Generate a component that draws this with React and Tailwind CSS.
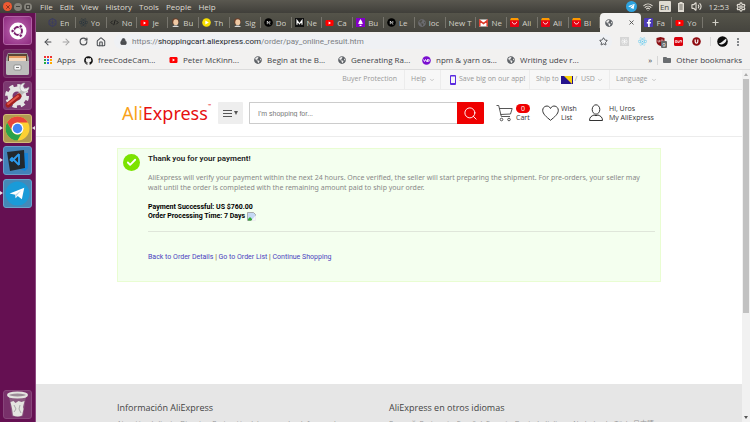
import React from "react";
import { SiUbuntu } from "react-icons/si";
import { FaYoutube, FaGithub, FaTelegramPlane, FaGlobeAmericas, FaReact, FaFacebookF, FaFolder } from "react-icons/fa";
import { ArrowLeft, ArrowRight, RotateCw, House, Lock, Star, Wifi, Volume2, Settings, Check, ChevronDown, Search, X, Plus } from "lucide-react";

const YouTube = () => (
  <svg width="9" height="8" viewBox="0 0 9 8" aria-hidden="true">
    <rect x="0.5" y="1" width="8" height="6" rx="1.2" fill="#f00" />
    <path d="M3.6 2.6 6 4 3.6 5.4Z" fill="#fff" />
  </svg>
);
const Globe = ({ color = "#5f6368" }) => <FaGlobeAmericas size={8} color={color} aria-hidden="true" />;
const Disc = ({ fill, children }) => (
  <svg width="9" height="9" viewBox="0 0 9 9" aria-hidden="true">
    <circle cx="4.5" cy="4.5" r="4.3" fill={fill} />
    {children}
  </svg>
);
const NextJs = () => (
  <Disc fill="#000">
    <path d="M3.3 6.2V3L6 6.6M5.8 3v2.2" stroke="#fff" strokeWidth="0.7" fill="none" />
  </Disc>
);
const Face = () => (
  <svg width="9" height="9" viewBox="0 0 9 9" aria-hidden="true">
    <circle cx="4.5" cy="3.6" r="3.3" fill="#6a3d28" />
    <ellipse cx="4.8" cy="4.2" rx="2.5" ry="2.9" fill="#efc9a4" />
    <path d="M1.5 9c0-2 6-2 6.3 0Z" fill="#d8d8d8" />
  </svg>
);
const AliBag = () => (
  <svg width="9" height="9" viewBox="0 0 9 9" aria-hidden="true">
    <path d="M0 2h9v6q0 1-1 1H1q-1 0-1-1Z" fill="#e60012" />
    <path d="M1 0h7l1 2.2H0Z" fill="#f90" />
    <path d="M2.3 3.8c.4 2.9 4 2.9 4.4 0" stroke="#fff" strokeWidth="0.9" fill="none" />
  </svg>
);
const Atom = () => <FaReact size={9} color="#26323c" aria-hidden="true" />;
const Hexagon = () => (
  <svg width="9" height="9" viewBox="0 0 9 9" fill="none" stroke="#3a3b62" aria-hidden="true">
    <path d="M4.5.5 8 2.5v4l-3.5 2L1 6.5v-4Z" /><path d="m1 2.5 7 4M8 2.5l-7 4M4.5.5v8" strokeWidth="0.6" />
  </svg>
);
const Code = () => (
  <svg width="9" height="9" viewBox="0 0 10 9" fill="none" stroke="#1b1b1b" aria-hidden="true">
    <path d="M3 2.5 1 4.5l2 2M7 2.5l2 2-2 2M5.8 1.5l-1.6 6" />
  </svg>
);
const Play = () => (
  <Disc fill="#f8e000"><path d="M3.3 2.4 6.8 4.5 3.3 6.6Z" fill="#fff" /></Disc>
);
const Medium = () => (
  <svg width="9" height="9" viewBox="0 0 9 9" aria-hidden="true">
    <rect width="9" height="9" fill="#111" /><path d="M2 6.8V2.4l2.5 3.4L7 2.4v4.4" stroke="#fff" strokeWidth="1.1" fill="none" />
  </svg>
);
const Bulb = () => (
  <svg width="9" height="9" viewBox="0 0 9 9" aria-hidden="true">
    <rect width="9" height="9" fill="#8400c8" /><path d="M4.5 1 6 3.5 6.8 6H2.2L3 3.5ZM3.5 6.7h2v1.3h-2Z" fill="#fff" />
  </svg>
);
const Gmail = () => (
  <svg width="9" height="8" viewBox="0 0 9 8" aria-hidden="true">
    <rect y="0.5" width="9" height="7" rx="0.6" fill="#fff" /><path d="M.8 7.5V1.6l3.7 3 3.7-3v5.9" stroke="#dd3b2c" strokeWidth="1.5" fill="none" />
  </svg>
);
const Facebook = () => (
  <span className="flex size-[9px] items-end justify-center rounded-[1px] bg-[#4b3ab5]"><FaFacebookF size={8} color="#fff" aria-hidden="true" /></span>
);

const tabs = [
  [Hexagon, "En"], [Atom, "Yo"], [Code, "No"], [YouTube, "Je"], [Face, "Bu"], [Play, "Th"], [Face, "Sig"],
  [NextJs, "Do"], [Medium, "Ne"], [YouTube, "Ca"], [Bulb, "Bu"], [NextJs, "Le"], [() => <Globe color="#6b6b70" />, "loc"],
  [null, "New T"], [Gmail, "Ne"], [AliBag, "Ali"], [AliBag, "Ali"], [AliBag, "BI"], [Globe, null], [Facebook, "Fa"], [YouTube, "Yo"],
];

function MenuBar() {
  return (
    <header className="flex h-[13px] shrink-0 items-center bg-linear-to-b from-[#5a5850] to-[#403f3a] font-['Open_Sans','Noto_Sans',sans-serif] text-[8px] text-[#dfdbd2]">
      <div className="flex w-[36px] shrink-0 items-center gap-[2px] pl-[3px]">
        <button aria-label="Close window" className="flex size-[9px] items-center justify-center rounded-full bg-[#ee5a32] text-[#6b2a18]"><X size={6} strokeWidth={3} /></button>
        <button aria-label="Minimize" className="flex size-[8px] items-center justify-center rounded-full bg-[#85837b]"><span className="h-px w-[4px] bg-[#45443f]" /></button>
        <button aria-label="Maximize" className="flex size-[8px] items-center justify-center rounded-full bg-[#85837b]"><span className="size-[4px] border border-[#45443f]" /></button>
      </div>
      <nav className="flex gap-[7px] pl-1">
        {["File", "Edit", "View", "History", "Tools", "People", "Help"].map((m) => <button key={m}>{m}</button>)}
      </nav>
      <div className="ml-auto flex items-center gap-[7px] pr-1">
        <div className="flex items-center gap-[6px]">
          <span className="flex size-[11px] items-center justify-center rounded-full bg-[#2ea3df]"><FaTelegramPlane size={7} color="#fff" /></span>
          <Wifi size={10} strokeWidth={2.5} />
          <span className="flex h-[11px] w-[12px] items-center justify-center rounded-[1px] bg-[#dfdbd2] text-[#45443f]">En</span>
          <svg width="8" height="10" viewBox="0 0 8 10" aria-hidden="true">
            <path d="M2.5 0h3v1H7v9H1V1h1.5Z" fill="#dfdbd2" /><path d="M2.3 3h3.4M2.3 5h3.4M2.3 7h3.4" stroke="#67655d" />
          </svg>
          <Volume2 size={11} strokeWidth={2.5} />
        </div>
        <span>12:53</span>
        <Settings size={10} strokeWidth={3} />
      </div>
    </header>
  );
}

function Tile({ className, running, active, label, children }) {
  return (
    <div className="relative flex w-full justify-center">
      {running && <span className="absolute top-[12px] left-0 border-y-[2px] border-l-[3px] border-y-transparent border-l-[#e8dfe6]" />}
      <button aria-label={label} className={"flex size-[29px] items-center justify-center rounded-[3px] border " + className}>{children}</button>
      {active && <span className="absolute top-[12px] right-0 border-y-[2px] border-r-[3px] border-y-transparent border-r-[#e8dfe6]" />}
    </div>
  );
}

function Launcher() {
  return (
    <aside className="flex w-[36px] shrink-0 flex-col justify-between border-r border-[#8d4a80] bg-[#651052] pt-[3px] pb-[3px]">
      <div className="flex h-[192px] flex-col justify-between">
        <Tile label="Dash" className="border-[#b163a4] bg-radial from-[#c06ab4] to-[#8e2a80]">
          <svg width="18" height="18" viewBox="0 0 18 18" aria-hidden="true">
            <circle cx="9" cy="9" r="8.500" fill="#fff" />
            <circle cx="9" cy="9" r="4" fill="none" stroke="#7b1f6e" strokeWidth="2" />
            <g stroke="#fff" strokeWidth="1"><circle cx="3.600" cy="9" r="1.800" fill="#7b1f6e" /><circle cx="11.700" cy="4.400" r="1.800" fill="#7b1f6e" /><circle cx="11.700" cy="13.600" r="1.800" fill="#7b1f6e" /></g>
          </svg>
        </Tile>
        <Tile label="Files" className="border-[#7d3a6c] bg-[#6d2560]">
          <svg width="25" height="25" viewBox="0 0 25 25" aria-hidden="true">
            <path d="M3 2h19l2 5v15q0 2-2 2H3q-2 0-2-2V7Z" fill="#9a9a98" />
            <path d="M3 3h19v8H3Z" fill="#5b4636" /><path d="M4 5h17v6H4Z" fill="#e59a62" /><path d="M4 7h17v4H4Z" fill="#f3d8bd" />
            <path d="M1 10h23v12q0 2-2 2H3q-2 0-2-2Z" fill="#bdbdbb" />
            <rect x="9" y="14" width="7" height="5" rx="1" fill="#f7f7f7" stroke="#777" strokeWidth="0.7" /><path d="M11 16.5h3" stroke="#777" />
          </svg>
        </Tile>
        <Tile label="System Settings" className="border-[#87467a] bg-[#7b3870]">
          <svg width="27" height="27" viewBox="0 0 27 27" aria-hidden="true">
            <circle cx="13" cy="14" r="10" fill="none" stroke="#e4e4e4" strokeWidth="4" strokeDasharray="4.2 3.65" />
            <circle cx="13" cy="14" r="7" fill="none" stroke="#e4e4e4" strokeWidth="5" />
            <path d="m14 14 6-6" stroke="#b9b9b9" strokeWidth="4" />
            <path d="M25 5a4.500 4.500 0 1 1-4-4l-2 3 2 3Z" fill="#eee" stroke="#999" strokeWidth="0.5" />
            <path d="m4 23 11-9" stroke="#a32020" strokeWidth="5" strokeLinecap="round" /><path d="m4 22 10-8" stroke="#e2594c" strokeWidth="2" strokeLinecap="round" />
          </svg>
        </Tile>
        <Tile label="Chrome" running active className="border-[#d2bd78] bg-[#b09a50]">
          <svg width="25" height="25" viewBox="0 0 24 24" aria-hidden="true">
            <circle cx="12" cy="12" r="11.500" fill="#fdd033" />
            <path d="M2 6.300A11.500 11.500 0 0 1 22 6.300H12A5.700 5.700 0 0 0 7 14.800Z" fill="#e8453c" />
            <path d="M2 6.300A11.500 11.500 0 0 0 12 23.500L17 14.800A5.700 5.700 0 0 1 7 14.800Z" fill="#2ba24c" />
            <circle cx="12" cy="12" r="5.700" fill="#fff" /><circle cx="12" cy="12" r="4.500" fill="#4285f4" />
          </svg>
        </Tile>
        <Tile label="Visual Studio Code" running className="border-[#6b9cc8] bg-[#4382b8]">
          <svg width="25" height="25" viewBox="0 0 25 25" aria-hidden="true">
            <path d="M19 5h4v15l-3 3-8-3 7-2Z" fill="#1683d8" />
            <path d="m2 4 17-2 1 18-15 3Z" fill="#23292e" />
            <path d="m14 6-7 7-2-1.500M14 17l-7-7-2 2M14 6v11" stroke="#2c9cf0" strokeWidth="1.800" fill="none" />
          </svg>
        </Tile>
        <Tile label="Telegram" running className="border-[#6aa4cc] bg-[#4489b8]">
          <svg width="25" height="25" viewBox="0 0 24 24" aria-hidden="true">
            <circle cx="12" cy="12" r="11.500" fill="#199bd8" />
            <path d="m4.500 12 14-5.500-2.300 11-4-3-2 2-.4-3.400Z" fill="#fff" /><path d="m9.800 13.100 6-4.300-4.600 5.200-1 2.500Z" fill="#b9d5e6" />
          </svg>
        </Tile>
      </div>
      <Tile label="Trash" className="border-[#87467a] bg-[#78306a]">
        <svg width="25" height="27" viewBox="0 0 25 27" aria-hidden="true">
          <path d="m4 5 3 20q5.500 2 11 0l3-20Z" fill="#8a5a80" />
          <path d="m5.500 11 3-1 2 2 3-2 3 1 3-1-1.500 6 .5 2-1.500 6.500q-4 2-9 0l-1-7Z" fill="#e4e4e0" /><path d="m9 14 2 4-2 3m6-7-1 4 2 4" stroke="#aaa" fill="none" />
          <ellipse cx="12.500" cy="4" rx="9.500" ry="2.500" fill="#9c8c98" stroke="#e3e3df" strokeWidth="2" />
        </svg>
      </Tile>
    </aside>
  );
}

function TabStrip() {
  return (
    <div className="flex h-[19px] shrink-0 items-center bg-linear-to-b from-[#55544a] to-[#45443e] pl-[9px] text-[8px] text-[#d2d0c8]">
      {tabs.map(([Icon, label], i) =>
        label ? (
          <button key={i} className="flex h-full min-w-0 flex-1 items-center">
            <span className="flex h-[11px] w-full items-center gap-[3px] overflow-hidden border-r border-[#77756d] pl-[3px]">
              {Icon && <span className="shrink-0"><Icon /></span>}
              <span className="overflow-hidden whitespace-nowrap leading-[11px] mr-[2px]">{label}</span>
            </span>
          </button>
        ) : (
          <div key={i} className="flex h-full min-w-0 flex-1 items-center justify-between rounded-t-[4px] bg-[#f2f1f0] pr-[6px] pl-[5px] text-[#4a4a4a]">
            <Globe />
            <button aria-label="Close tab"><X size={7} strokeWidth={3} /></button>
          </div>
        )
      )}
      <button aria-label="New tab" className="flex w-[47px] shrink-0 pl-[8px]"><Plus size={9} strokeWidth={3} /></button>
    </div>
  );
}

function Toolbar() {
  return (
    <div className="flex h-[19px] shrink-0 items-center bg-[#f2f1f0] pr-[11px] pl-[7px] text-[#4a4d51]">
      <div className="flex items-center gap-[8px]">
        <button aria-label="Back"><ArrowLeft size={10} strokeWidth={2.5} /></button>
        <button aria-label="Forward" className="text-[#a3a3a3]"><ArrowRight size={10} strokeWidth={2.5} /></button>
        <button aria-label="Reload"><RotateCw size={9} strokeWidth={3} /></button>
        <button aria-label="Home"><House size={10} strokeWidth={2.5} /></button>
      </div>
      <form className="ml-[8px] flex h-[15px] min-w-0 flex-1 items-center rounded-full bg-[#eff1f4] pr-1 pl-[6px]">
        <Lock size={7} strokeWidth={3} fill="currentColor" className="shrink-0" />
        <div className="ml-[5px] flex-1 font-['Roboto','Noto_Sans',sans-serif] text-[8px] whitespace-nowrap text-[#7b7e83]">
          https://<span className="text-[#24262a]">shoppingcart.aliexpress.com</span>/order/pay_online_result.htm
        </div>
        <button type="button" aria-label="Bookmark"><Star size={9} strokeWidth={2.5} /></button>
      </form>
      <div className="ml-[8px] flex items-center gap-[9px]">
        <span className="flex size-[9px] items-center justify-center bg-[#d5d5d5]"><FaReact size={7} color="#fff" /></span>
        <FaReact size={9} color="#61c9ee" />
        <span className="relative">
          <svg width="9" height="9" viewBox="0 0 9 9" aria-hidden="true"><path d="M.5 1 4.500 0l4 1v3.500q0 3-4 4.500-4-1.500-4-4.500Z" fill="#8a0d12" /><path d="M2 3v2h1.500V3M5 3v2h2V3Z" stroke="#fff" strokeWidth="0.500" fill="none" /></svg>
          <span className="absolute top-[4px] left-[5px] flex h-[7px] w-[6px] items-center justify-center rounded-[1px] bg-[#666] text-[6px] leading-none text-white">9</span>
        </span>
        <svg width="9" height="9" viewBox="0 0 9 9" aria-hidden="true"><rect width="9" height="9" rx="1.500" fill="#d8000c" /><path d="M1.300 3.500h1.500v2H1.300ZM3.800 3.500v2h1.300v-2M6 5.500v-2h1.600v2" stroke="#fff" strokeWidth="0.700" fill="none" /></svg>
        <Disc fill="#8e0b10"><path d="M3.200 2.500v2.200q0 1.500 1.300 1.500t1.300-1.500V2.500" stroke="#fff" strokeWidth="1.200" fill="none" /></Disc>
        <span className="h-[9px] w-px bg-[#d6d6d6]" />
        <svg width="11" height="11" viewBox="0 0 11 11" className="-ml-[3px]" aria-hidden="true"><circle cx="5.500" cy="5.500" r="5.300" fill="#0c0c0c" /><path d="M9.300 2.500Q7 4 5.500 5.500T1.800 7.500Q4 9.500 7 7.500t2.300-5" fill="#eee" /></svg>
        <button aria-label="Menu" className="flex flex-col gap-[1px]">
          {[0, 1, 2].map((d) => <span key={d} className="size-[2px] rounded-full bg-[#5f6368]" />)}
        </button>
      </div>
    </div>
  );
}

function Bookmark({ icon, width, children }) {
  return (
    <a href="#" className={"flex shrink-0 items-center gap-[5px] whitespace-nowrap " + width}>{icon}{children}</a>
  );
}

function BookmarkBar() {
  const apps = ["#e33", "#e33", "#e33", "#2a4", "#36f", "#fa0", "#2a4", "#36f", "#fa0"];
  return (
    <nav className="flex h-[19px] shrink-0 items-center border-b border-[#dcdcdc] bg-[#f2f1f0] pr-[8px] pl-[8px] text-[8px] text-[#3f4247]">
      <Bookmark width="w-[40px]" icon={<span className="grid grid-cols-3 gap-px">{apps.map((c, i) => <span key={i} className="size-[2px]" style={{ background: c }} />)}</span>}>Apps</Bookmark>
      <Bookmark width="w-[85px]" icon={<FaGithub size={9} color="#111" />}>freeCodeCam...</Bookmark>
      <Bookmark width="w-[85px]" icon={<YouTube />}>Peter McKinn...</Bookmark>
      <Bookmark width="w-[84px]" icon={<Globe />}>Begin at the B...</Bookmark>
      <Bookmark width="w-[84px]" icon={<Globe />}>Generating Ra...</Bookmark>
      <Bookmark width="w-[85px]" icon={<Disc fill="#7a0fd0"><path d="M1.500 3.500 2.500 5.500l1-2 1 2 1-2V6M5.500 3.700h1.700v1.500H5.500" stroke="#fff" strokeWidth="0.800" fill="none" /></Disc>}>npm &amp; yarn os...</Bookmark>
      <Bookmark width="w-[84px]" icon={<Globe />}>Writing udev r...</Bookmark>
      <div className="ml-auto flex shrink-0 items-center gap-[5px]">
        <button aria-label="More bookmarks">»</button>
        <span className="h-[9px] w-px bg-[#d6d6d6]" />
        <a href="#" className="flex items-center gap-[5px]"><FaFolder size={8} color="#6a6d70" />Other bookmarks</a>
      </div>
    </nav>
  );
}

function ShopBar() {
  const cell = "flex h-full shrink-0 items-center border-l border-[#ececec] pl-[6px] whitespace-nowrap ";
  return (
    <div className="h-[20px] border-b border-[#ececec] bg-[#f7f7f7]">
      <div className="mx-auto flex h-full w-[544px] max-w-full items-center justify-end text-[7px] text-[#999]">
        <a href="#" className="pr-[7px]">Buyer Protection</a>
        <button className={cell + "w-[36px] gap-[3px]"}>Help<ChevronDown size={6} /></button>
        <a href="#" className={cell + "w-[89px] gap-[3px] pl-[9px]"}>
          <svg width="6" height="10" viewBox="0 0 6 10" aria-hidden="true"><rect width="6" height="10" rx="1" fill="#5a2be0" /><path d="M1 1.500h4v6.500H1Z" fill="#f7f7f7" /></svg>
          Save big on our app!
        </a>
        <button className={cell + "w-[80px] gap-[2px]"}>
          Ship to
          <svg width="12" height="8" viewBox="0 0 12 8" aria-hidden="true"><rect width="12" height="8" fill="#24128c" /><path d="M3 0h8v8Z" fill="#fcd40a" /></svg>
          <span>/&nbsp; USD</span><ChevronDown size={6} />
        </button>
        <button className={cell + "w-[52px] gap-[3px]"}>Language<ChevronDown size={6} /></button>
      </div>
    </div>
  );
}

function ShopHeader() {
  return (
    <div className="border-b border-[#ececec]">
      <div className="mx-auto flex h-[46px] w-[544px] max-w-full items-center pl-[5px] text-[7px] leading-[9px] text-[#333]">
        <a href="#" className="flex w-[96px] shrink-0 items-start font-['Noto_Sans','Open_Sans',sans-serif] text-[18px] leading-[24px] text-[#e61010]">
          <span className="text-[#f9a21a]">Ali</span>Express<span className="text-[4px] leading-[10px]">™</span>
        </a>
        <button aria-label="Categories" className="flex h-[22px] w-[25px] shrink-0 items-center justify-center gap-[2px] rounded-[1px] bg-[#eee] text-[#555]">
          <span className="flex flex-col gap-[2px]"><span className="h-px w-[9px] bg-[#555]" /><span className="h-px w-[9px] bg-[#555]" /><span className="h-px w-[9px] bg-[#555]" /></span>
          <span className="border-x-[2px] border-t-[4px] border-x-transparent border-t-[#555]" />
        </button>
        <form className="ml-[6px] flex h-[22px] w-[235px] shrink-0">
          <input aria-label="Search" placeholder="I'm shopping for..." className="min-w-0 flex-1 rounded-l-[1px] border border-r-0 border-[#ccc] px-[8px] font-['Liberation_Sans',Arial,sans-serif] text-[7px] placeholder:text-[#777]" />
          <button type="button" aria-label="Submit search" className="flex w-[27px] items-center justify-center rounded-r-[1px] bg-[#ef0000] text-white"><Search size={15} strokeWidth={1.5} /></button>
        </form>
        <a href="#" className="ml-[12px] flex w-[46px] shrink-0 items-center gap-[3px]">
          <svg width="17" height="18" viewBox="0 0 17 18" fill="none" stroke="#444" strokeWidth="0.900" aria-hidden="true">
            <path d="M.5 1.500h2.200L5.300 12.500H14M3.200 4.500h13l-1.700 5.500-10 .5" /><circle cx="5.500" cy="15.500" r="1.300" /><circle cx="13" cy="15.500" r="1.300" />
          </svg>
          <span className="flex flex-col"><span className="flex h-[9px] w-[14px] items-center justify-center rounded-full bg-[#ef0000] text-white">0</span>Cart</span>
        </a>
        <a href="#" className="flex w-[47px] shrink-0 items-center gap-[2px]">
          <svg width="17" height="16" viewBox="0 0 17 16" fill="none" stroke="#333" strokeWidth="1" aria-hidden="true"><path d="M8.500 15.300C4.500 12 .7 9 .7 5.300.7 1 6.500-.8 8.500 3.500c2-4.300 7.800-2.500 7.800 1.800 0 3.700-3.800 6.700-7.800 10Z" /></svg>
          <span>Wish<br />List</span>
        </a>
        <a href="#" className="flex shrink-0 items-center gap-[6px] whitespace-nowrap">
          <svg width="14" height="18" viewBox="0 0 14 18" fill="none" stroke="#333" strokeWidth="1" aria-hidden="true"><ellipse cx="7" cy="5.500" rx="3.800" ry="4.700" /><path d="M.5 16.500c0-3.500 2-4.500 4.500-5.500 1 .8 3 .8 4 0 2.500 1 4.500 2 4.500 5.500Z" /></svg>
          <span>Hi, Uros<br />My AliExpress</span>
        </a>
      </div>
    </div>
  );
}

function BrokenImage() {
  return (
    <svg width="9" height="9" viewBox="0 0 9 9" className="inline-block" role="img" aria-label="missing">
      <path d="M.5.5h6l2 2v6h-8Z" fill="#c5d8f4" stroke="#9a9a9a" strokeWidth="0.800" /><path d="M1 8.500V7l2-2 2 2v1.500Z" fill="#35a835" /><path d="m9 3-5 6h5Z" fill="#fff" opacity="0.800" />
    </svg>
  );
}

function Message() {
  return (
    <section className="mx-auto mt-[11px] flex h-[134px] w-[544px] max-w-full gap-[8px] border border-[#e9fdd2] bg-[#f4ffef] px-[5px] pt-[5px] font-['Roboto','Noto_Sans',sans-serif] text-[7px]">
      <span className="flex size-[17px] shrink-0 items-center justify-center rounded-full bg-[#7be300] text-white"><Check size={11} strokeWidth={4} /></span>
      <div className="flex-1">
        <h1 className="text-[8px] leading-[10px] font-semibold text-[#222]">Thank you for your payment!</h1>
        <p className="mt-[9px] pr-2 font-['Noto_Sans','Open_Sans',sans-serif] leading-[10px] text-[#888]">AliExpress will verify your payment within the next 24 hours. Once verified, the seller will start preparing the shipment. For pre-orders, your seller may wait until the order is completed with the remaining amount paid to ship your order.</p>
        <div className="mt-[10px] leading-[9px] font-bold text-black">
          <p>Payment Successful: US $760.00</p>
          <p className="flex items-center gap-[2px]">Order Processing Time: 7 Days <BrokenImage /></p>
        </div>
        <hr className="mt-[10px] border-[#dfe6da]" />
        <p className="mt-[20px] leading-[10px] text-[#7a4a1a]">
          <a href="#" className="text-[#4a3fc0]">Back to Order Details</a> | <a href="#" className="text-[#4a3fc0]">Go to Order List</a> | <a href="#" className="text-[#4a3fc0]">Continue Shopping</a>
        </p>
      </div>
    </section>
  );
}

function Footer() {
  return (
    <footer className="mt-auto h-[38px] shrink-0 overflow-hidden bg-[#e6e6e6] pt-[18px]">
      <div className="mx-auto grid w-[544px] max-w-full grid-cols-2 text-[7px] leading-[10px] whitespace-nowrap text-[#999]">
        <div><h2 className="mb-[5px] text-[9px] leading-[12px] text-[#444]">Información AliExpress</h2><p>Atención al cliente, Disputas, Protección del comprador, Informar de</p></div>
        <div><h2 className="mb-[5px] text-[9px] leading-[12px] text-[#444]">AliExpress en otros idiomas</h2><p>Pусский, Portugués, Español, Francés, Deutsch, Italiano, Nederlands, Türk, 日本語</p></div>
      </div>
    </footer>
  );
}

export default function App() {
  return (
    <div className="flex h-screen flex-col overflow-hidden bg-white font-['Open_Sans','Noto_Sans','Noto_Sans_CJK_JP',sans-serif]">
      <MenuBar />
      <div className="flex min-h-0 flex-1">
        <Launcher />
        <div className="flex min-w-0 flex-1 flex-col">
          <TabStrip />
          <Toolbar />
          <BookmarkBar />
          <div className="flex min-h-0 flex-1">
            <main className="flex min-w-0 flex-1 flex-col overflow-hidden">
              <ShopBar />
              <ShopHeader />
              <Message />
              <Footer />
            </main>
            <div className="flex w-[8px] shrink-0 flex-col items-center justify-between bg-[#f1f1f1] py-[3px]">
              <span className="border-x-[2px] border-b-[3px] border-x-transparent border-b-[#aaa]" />
              <span className="my-[3px] w-[6px] flex-1"><span className="block h-[70%] bg-[#c1c1c1]" /></span>
              <span className="border-x-[2px] border-t-[3px] border-x-transparent border-t-[#555]" />
            </div>
          </div>
        </div>
      </div>
    </div>
  );
}
